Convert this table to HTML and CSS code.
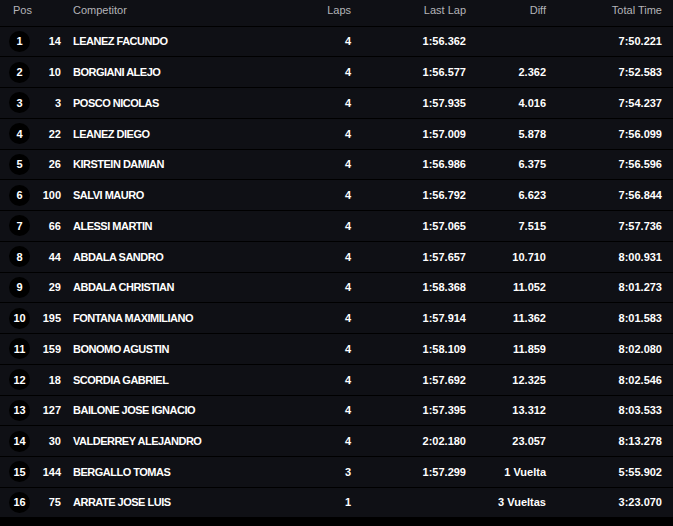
FILE: index.html
```html
<!DOCTYPE html>
<html>
<head>
<meta charset="utf-8">
<link rel="stylesheet" href="styles.css">
</head>
<body>
<table class="results">
  <thead>
    <tr>
      <th class="c-pos">Pos</th>
      <th class="c-num"></th>
      <th class="c-name">Competitor</th>
      <th class="c-laps">Laps</th>
      <th class="c-last">Last Lap</th>
      <th class="c-diff">Diff</th>
      <th class="c-total">Total Time</th>
    </tr>
  </thead>
  <tbody>
    <tr><td class="c-pos"><span class="badge">1</span></td><td class="c-num">14</td><td class="c-name">LEANEZ FACUNDO</td><td class="c-laps">4</td><td class="c-last">1:56.362</td><td class="c-diff"></td><td class="c-total">7:50.221</td></tr>
    <tr><td class="c-pos"><span class="badge">2</span></td><td class="c-num">10</td><td class="c-name">BORGIANI ALEJO</td><td class="c-laps">4</td><td class="c-last">1:56.577</td><td class="c-diff">2.362</td><td class="c-total">7:52.583</td></tr>
    <tr><td class="c-pos"><span class="badge">3</span></td><td class="c-num">3</td><td class="c-name">POSCO NICOLAS</td><td class="c-laps">4</td><td class="c-last">1:57.935</td><td class="c-diff">4.016</td><td class="c-total">7:54.237</td></tr>
    <tr><td class="c-pos"><span class="badge">4</span></td><td class="c-num">22</td><td class="c-name">LEANEZ DIEGO</td><td class="c-laps">4</td><td class="c-last">1:57.009</td><td class="c-diff">5.878</td><td class="c-total">7:56.099</td></tr>
    <tr><td class="c-pos"><span class="badge">5</span></td><td class="c-num">26</td><td class="c-name">KIRSTEIN DAMIAN</td><td class="c-laps">4</td><td class="c-last">1:56.986</td><td class="c-diff">6.375</td><td class="c-total">7:56.596</td></tr>
    <tr><td class="c-pos"><span class="badge">6</span></td><td class="c-num">100</td><td class="c-name">SALVI MAURO</td><td class="c-laps">4</td><td class="c-last">1:56.792</td><td class="c-diff">6.623</td><td class="c-total">7:56.844</td></tr>
    <tr><td class="c-pos"><span class="badge">7</span></td><td class="c-num">66</td><td class="c-name">ALESSI MARTIN</td><td class="c-laps">4</td><td class="c-last">1:57.065</td><td class="c-diff">7.515</td><td class="c-total">7:57.736</td></tr>
    <tr><td class="c-pos"><span class="badge">8</span></td><td class="c-num">44</td><td class="c-name">ABDALA SANDRO</td><td class="c-laps">4</td><td class="c-last">1:57.657</td><td class="c-diff">10.710</td><td class="c-total">8:00.931</td></tr>
    <tr><td class="c-pos"><span class="badge">9</span></td><td class="c-num">29</td><td class="c-name">ABDALA CHRISTIAN</td><td class="c-laps">4</td><td class="c-last">1:58.368</td><td class="c-diff">11.052</td><td class="c-total">8:01.273</td></tr>
    <tr><td class="c-pos"><span class="badge">10</span></td><td class="c-num">195</td><td class="c-name">FONTANA MAXIMILIANO</td><td class="c-laps">4</td><td class="c-last">1:57.914</td><td class="c-diff">11.362</td><td class="c-total">8:01.583</td></tr>
    <tr><td class="c-pos"><span class="badge">11</span></td><td class="c-num">159</td><td class="c-name">BONOMO AGUSTIN</td><td class="c-laps">4</td><td class="c-last">1:58.109</td><td class="c-diff">11.859</td><td class="c-total">8:02.080</td></tr>
    <tr><td class="c-pos"><span class="badge">12</span></td><td class="c-num">18</td><td class="c-name">SCORDIA GABRIEL</td><td class="c-laps">4</td><td class="c-last">1:57.692</td><td class="c-diff">12.325</td><td class="c-total">8:02.546</td></tr>
    <tr><td class="c-pos"><span class="badge">13</span></td><td class="c-num">127</td><td class="c-name">BAILONE JOSE IGNACIO</td><td class="c-laps">4</td><td class="c-last">1:57.395</td><td class="c-diff">13.312</td><td class="c-total">8:03.533</td></tr>
    <tr><td class="c-pos"><span class="badge">14</span></td><td class="c-num">30</td><td class="c-name">VALDERREY ALEJANDRO</td><td class="c-laps">4</td><td class="c-last">2:02.180</td><td class="c-diff">23.057</td><td class="c-total">8:13.278</td></tr>
    <tr><td class="c-pos"><span class="badge">15</span></td><td class="c-num">144</td><td class="c-name">BERGALLO TOMAS</td><td class="c-laps">3</td><td class="c-last">1:57.299</td><td class="c-diff">1 Vuelta</td><td class="c-total">5:55.902</td></tr>
    <tr><td class="c-pos"><span class="badge">16</span></td><td class="c-num">75</td><td class="c-name">ARRATE JOSE LUIS</td><td class="c-laps">1</td><td class="c-last"></td><td class="c-diff">3 Vueltas</td><td class="c-total">3:23.070</td></tr>
  </tbody>
</table>
</body>
</html>
```

FILE: styles.css
```css
html, body {
  margin: 0;
  padding: 0;
  background: #000;
}

.results {
  width: 673px;
  border-collapse: collapse;
  table-layout: fixed;
  background: #0f1015;
  font-family: "Liberation Sans", Arial, sans-serif;
  font-size: 11px;
  color: #fff;
}

.results th,
.results td {
  box-sizing: border-box;
  padding: 0;
  white-space: nowrap;
  vertical-align: middle;
  border-bottom: 1px solid #000;
}

.results th {
  height: 26px;
  padding-bottom: 5px;
  font-weight: normal;
  color: #b4b4b8;
  text-align: left;
}

.results td {
  height: 30.75px;
  font-weight: bold;
}

.results tbody tr:last-child td {
  border-bottom: none;
  height: 29.75px;
}

.c-pos { width: 35px; }
.c-num { width: 26px; }
.c-name { width: 250px; }
.c-laps { width: 40px; }
.c-last { width: 115px; }
.c-diff { width: 80px; }
.c-total { width: 127px; }

.results th.c-pos { padding-left: 13px; }
.results td.c-pos { padding-left: 9px; }
.results .c-name { padding-left: 12px; }
.results td.c-name { letter-spacing: -0.5px; }
.results .c-num,
.results .c-laps,
.results .c-last,
.results .c-diff,
.results .c-total { text-align: right; }
.results .c-total { padding-right: 11px; }

.badge {
  display: flex;
  align-items: center;
  justify-content: center;
  width: 21px;
  height: 21px;
  border-radius: 50%;
  background: #000;
  color: #fff;
  font-weight: bold;
}
```
